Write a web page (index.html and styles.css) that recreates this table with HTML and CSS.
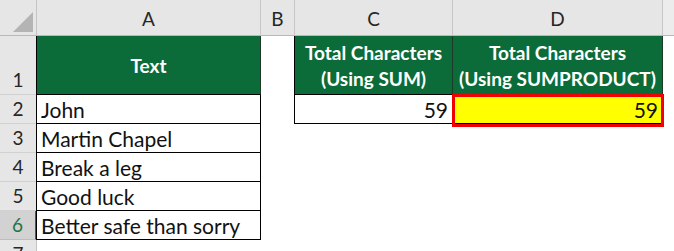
FILE: index.html
```html
<!DOCTYPE html>
<html lang="en">
<head>
    <meta charset="UTF-8">
    <title>Total Characters</title>
    <link rel="stylesheet" href="styles.css">
</head>
<body>

<div class="sheet">
    <!-- column headers -->
    <div class="corner"><span class="tri"></span></div>
    <div class="colHead">A</div>
    <div class="colHead">B</div>
    <div class="colHead">C</div>
    <div class="colHead">D</div>
    <div class="colHead last"></div>

    <!-- row 1 -->
    <div class="rowHead">1</div>
    <div class="cell hdr first">Text</div>
    <div class="cell blank"></div>
    <div class="cell hdr first two">Total Characters<br>(Using SUM)</div>
    <div class="cell hdr two">Total Characters<br>(Using SUMPRODUCT)</div>
    <div class="cell blank"></div>

    <!-- row 2 -->
    <div class="rowHead">2</div>
    <div class="cell data first">John</div>
    <div class="cell blank"></div>
    <div class="cell data first num">59</div>
    <div class="cell data num hit">59</div>
    <div class="cell blank"></div>

    <!-- row 3 -->
    <div class="rowHead">3</div>
    <div class="cell data first">Martin Chapel</div>
    <div class="cell blank"></div>
    <div class="cell blank"></div>
    <div class="cell blank"></div>
    <div class="cell blank"></div>

    <!-- row 4 -->
    <div class="rowHead">4</div>
    <div class="cell data first">Break a leg</div>
    <div class="cell blank"></div>
    <div class="cell blank"></div>
    <div class="cell blank"></div>
    <div class="cell blank"></div>

    <!-- row 5 -->
    <div class="rowHead">5</div>
    <div class="cell data first">Good luck</div>
    <div class="cell blank"></div>
    <div class="cell blank"></div>
    <div class="cell blank"></div>
    <div class="cell blank"></div>

    <!-- row 6 (active row) -->
    <div class="rowHead active">6</div>
    <div class="cell data first">Better safe than sorry</div>
    <div class="cell blank"></div>
    <div class="cell blank"></div>
    <div class="cell blank"></div>
    <div class="cell blank"></div>

    <!-- row 7, only the top shows -->
    <div class="rowHead cut"><span>7</span></div>
    <div class="cell blank"></div>
    <div class="cell blank"></div>
    <div class="cell blank"></div>
    <div class="cell blank"></div>
    <div class="cell blank"></div>
</div>

</body>
</html>
```

FILE: styles.css
```css
* {
    box-sizing: border-box;
}

body {
    margin: 0;
    background: #fff;
    font-family: "Lato", "Open Sans", sans-serif;
    overflow: hidden;
}

.sheet {
    display: grid;
    grid-template-columns: 37px 224px 34px 158px 210px 11px;
    grid-template-rows: 36px 59px 29px 29px 29px 29px 29px 11px;
    width: 674px;
    height: 251px;
    overflow: hidden;
}

/* top-left select-all box */
.corner {
    background: #e6e6e6;
    border-right: 1px solid #c4c4c4;
    border-bottom: 1px solid #b8b8b8;
    position: relative;
}
.tri {
    position: absolute;
    right: 3px;
    bottom: 3px;
    width: 0;
    height: 0;
    border-left: 20px solid transparent;
    border-bottom: 20px solid #b4b4b4;
}

.colHead {
    background: #e6e6e6;
    border-right: 1px solid #c6c6c6;
    border-bottom: 1px solid #b8b8b8;
    color: #262626;
    font-size: 19px;
    display: flex;
    align-items: center;
    justify-content: center;
    padding-top: 2px;
}
.colHead.last {
    background: #ececec;
    border-right: none;
}

.rowHead {
    background: #e6e6e6;
    border-right: 1px solid #c4c4c4;
    border-bottom: 1px solid #d0d0d0;
    color: #262626;
    font-size: 19px;
    display: flex;
    align-items: flex-end;
    justify-content: center;
    padding-bottom: 3px;
}
.rowHead.active {
    background: #d2d2d2;
    color: #217346;
    border-right: 2px solid #217346;
    border-bottom-color: #bdbdbd;
}
.rowHead.cut {
    align-items: flex-start;
    padding: 0;
    border-bottom: none;
    overflow: hidden;
    line-height: 1;
}
.rowHead.cut span {
    margin-top: 4px;
}

.cell {
    font-size: 21px;
    color: #111;
    white-space: nowrap;
}

.data {
    border-right: 1px solid #000;
    border-bottom: 1px solid #000;
    display: flex;
    align-items: flex-end;
    padding: 0 0 1px 4px;
}
.first {
    border-left: 1px solid #000;
    margin-left: -1px;
}

.hdr {
    background: #0b6b39;
    color: #fff;
    font-weight: bold;
    font-size: 19px;
    border-right: 1px solid #1d3a28;
    border-bottom: 1px solid #000;
    display: flex;
    align-items: center;
    justify-content: center;
    text-align: center;
}
.hdr.two {
    line-height: 26px;
    padding-top: 1px;
}

.num {
    justify-content: flex-end;
    padding-right: 4px;
}

.hit {
    background: #ffff00;
    position: relative;
}
.hit::after {
    content: "";
    position: absolute;
    left: -1px;
    right: -2px;
    top: -1px;
    bottom: -4px;
    border: 3px solid #f00000;
}
```
